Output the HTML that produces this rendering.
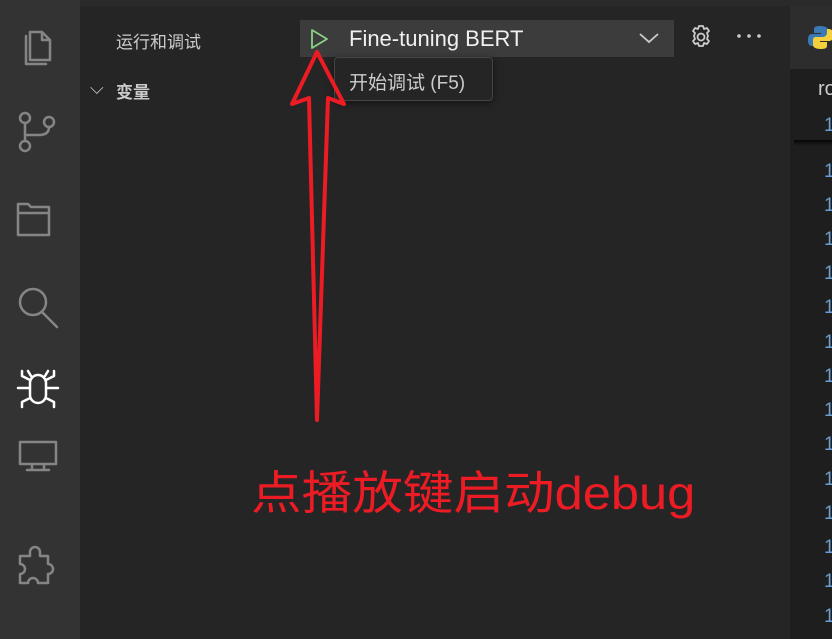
<!DOCTYPE html>
<html style="overflow:hidden"><head><meta charset="utf-8"><style>
html,body{margin:0;width:832px;height:639px;overflow:hidden}
body{background:#252526;font-family:"Liberation Sans","Noto Sans CJK SC",sans-serif;position:relative}
.abs{position:absolute}
.n{position:absolute;left:824px;color:#6a9fd4;font-size:19px;line-height:20px}
</style></head><body>
<div class="abs" style="left:0;top:0;width:832px;height:6px;background:#2a2a2a"></div>
<div class="abs" style="left:0;top:0;width:80px;height:639px;background:#333333"></div>
<div class="abs" style="left:790px;top:6px;width:42px;height:633px;background:#1e1e1e"></div>
<div class="abs" style="left:790px;top:6px;width:42px;height:63px;background:#2d2d2d"></div>
<div class="abs" style="left:794px;top:140px;width:38px;height:6px;background:linear-gradient(#000,transparent);opacity:.8"></div>
<svg class="abs" style="left:0;top:0" width="80" height="639" fill="none" stroke="#858585" stroke-width="2.5" stroke-linejoin="round" stroke-linecap="round">
<path d="M30 32h12l8 8v20h-20z M42 32v8h8 M26 36v28h20"/>
<circle cx="25" cy="118" r="5"/><circle cx="25" cy="146" r="5"/><circle cx="49" cy="122" r="5"/><path d="M25 123v18 M49 127q0 8-10 8h-12"/>
<path d="M18 204h10l3 3h18v28h-31z M18 213h31"/>
<circle cx="33" cy="302" r="13"/><path d="M42 312l15 15"/>
<path d="M20 442h36v22h-36z M32 464v5 M44 464v5 M27 470h22" />
<path d="M30 552a5 5 0 0 1 10 0v4h8v8a5 5 0 0 1 0 10v9h-10a5 5 0 0 0-10 0h-8v-9a5 5 0 0 0 0-10v-8h10z"/>
<g stroke="#fff"><path d="M30 383a8 8 0 0 1 16 0v12a8 8 0 0 1-16 0z M31 376l-3-5 M45 376l3-5 M18 388h12 M46 388h12 M30 380l-8-4v-5 M46 380l8-4v-5 M30 398l-8 4v5 M46 398l8 4v5"/></g>
</svg>
<div class="abs" style="left:116px;top:28px;color:#cccccc;font-size:17px">运行和调试</div>
<div class="abs" style="left:90px;top:78px;color:#ccc;font-size:18px">⌵</div>
<div class="abs" style="left:116px;top:78px;color:#ccc;font-size:17px;font-weight:bold">变量</div>
<div class="abs" style="left:300px;top:20px;width:374px;height:37px;background:#3c3c3c"></div>
<svg class="abs" style="left:308px;top:27px" width="24" height="24"><path d="M4 3l15 9-15 9z" fill="none" stroke="#89d185" stroke-width="1.8" stroke-linejoin="round"/></svg>
<div class="abs" style="left:349px;top:26px;color:#f0f0f0;font-size:22px">Fine-tuning BERT</div>
<svg class="abs" style="left:638px;top:30px" width="22" height="16"><path d="M2 4l9 8 9-8" fill="none" stroke="#ccc" stroke-width="1.8"/></svg>
<div class="abs" style="left:334px;top:57px;width:157px;height:42px;background:#252526;border:1px solid #454545;border-radius:4px;box-shadow:0 2px 8px rgba(0,0,0,.5)"></div>
<div class="abs" style="left:349px;top:68px;color:#ccc;font-size:19px">开始调试 (F5)</div>
<svg class="abs" style="left:688px;top:24px" width="28" height="26" fill="none" stroke="#ccc" stroke-width="1.8"><circle cx="13" cy="13" r="3.5"/><path d="M11 2h4l1 3 3-1 2 3-2 2 1 3-1 3 2 2-2 3-3-1-1 3h-4l-1-3-3 1-2-3 2-2-1-3 1-3-2-2 2-3 3 1z" stroke-linejoin="round"/></svg>
<svg class="abs" style="left:736px;top:32px" width="26" height="10" fill="#ccc"><circle cx="3" cy="4" r="1.8"/><circle cx="13" cy="4" r="1.8"/><circle cx="23" cy="4" r="1.8"/></svg>
<svg class="abs" style="left:808px;top:24px" width="24" height="26"><path d="M12 2c-6 0-6 2-6 4v3h7v1H4c-3 0-4 2-4 6s1 6 4 6h2v-4c0-2 2-4 4-4h7c2 0 3-1 3-3V6c0-2-2-4-8-4z" fill="#3a79b4"/><path d="M13 25c6 0 6-2 6-4v-3h-7v-1h9c3 0 4-2 4-6s-1-6-4-6h-2v4c0 2-2 4-4 4H8c-2 0-3 1-3 3v5c0 2 2 4 8 4z" fill="#f5d03c"/></svg>
<div class="abs" style="left:818px;top:78px;color:#ccc;font-size:20px">ro</div>
<div class="n" style="top:116px">1</div>
<div class="n" style="top:162px">1</div>
<div class="n" style="top:196px">1</div>
<div class="n" style="top:230px">1</div>
<div class="n" style="top:264px">1</div>
<div class="n" style="top:298px">1</div>
<div class="n" style="top:333px">1</div>
<div class="n" style="top:367px">1</div>
<div class="n" style="top:401px">1</div>
<div class="n" style="top:435px">1</div>
<div class="n" style="top:470px">1</div>
<div class="n" style="top:504px">1</div>
<div class="n" style="top:538px">1</div>
<div class="n" style="top:572px">1</div>
<div class="n" style="top:607px">1</div>
<svg class="abs" style="left:0;top:0" width="832" height="639"><path d="M317 52L344 104L328 98L317 420L309 98L292 104Z" fill="none" stroke="#ed1c24" stroke-width="4" stroke-linejoin="round"/></svg>
<div class="abs" style="left:251px;top:457px;color:#ed1c24;font-size:46px;white-space:nowrap;transform:scaleX(1.1);transform-origin:left center">点播放键启动debug</div>
</body></html>
